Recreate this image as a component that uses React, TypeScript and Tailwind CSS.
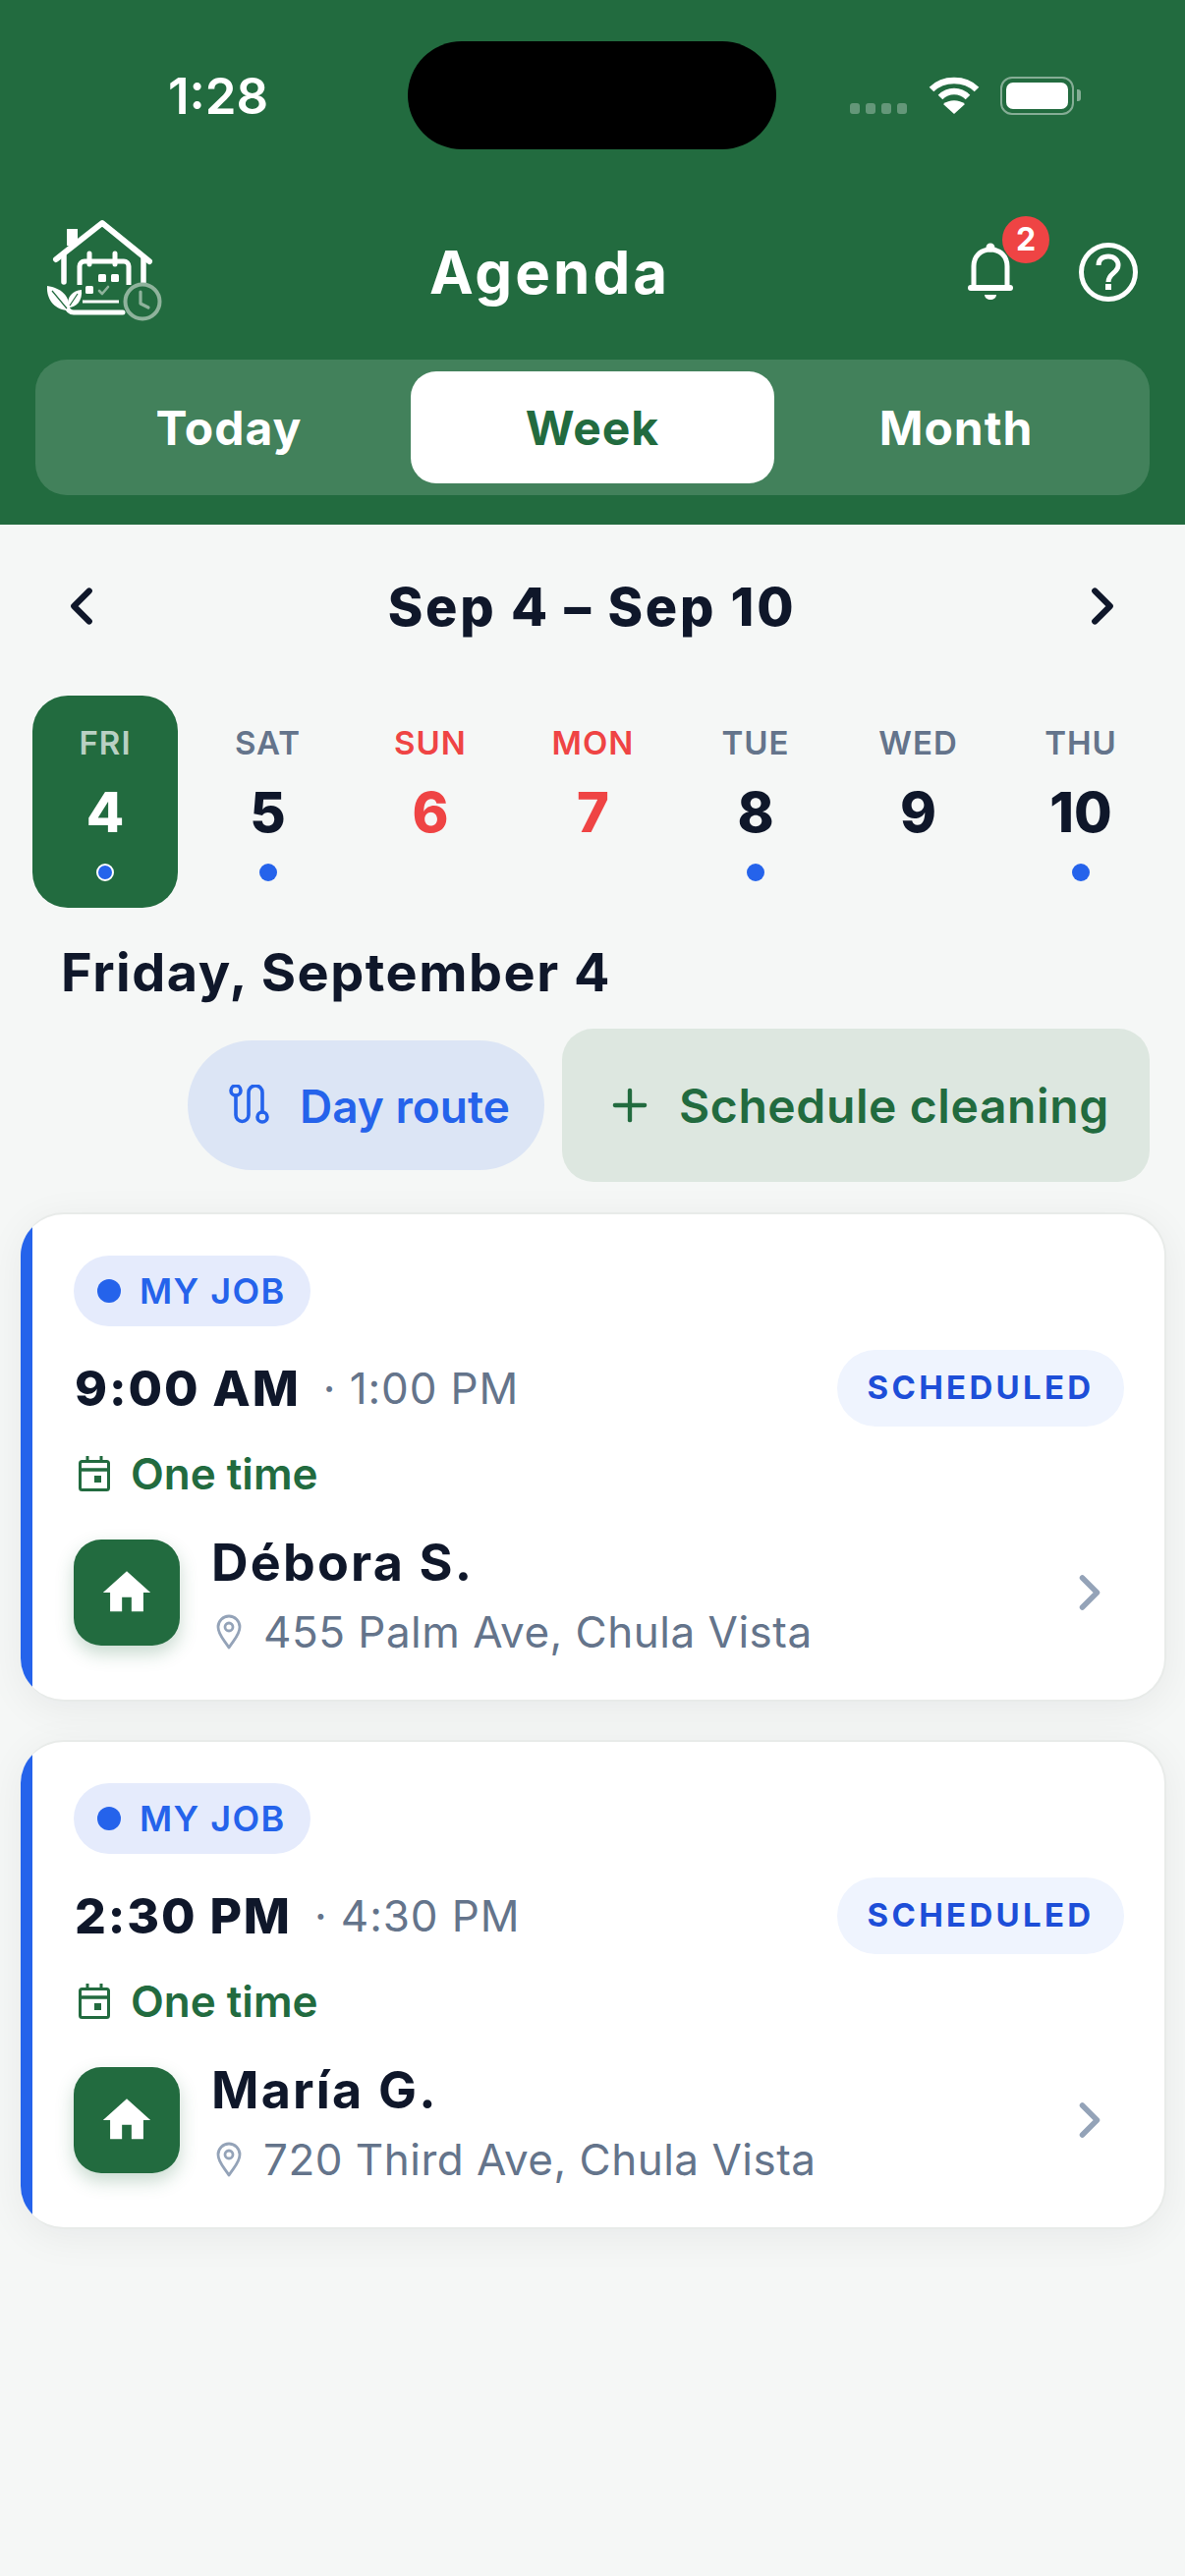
import React from 'react';
import { ChevronLeft, ChevronRight, Plus } from 'lucide-react';
import { MdHome } from 'react-icons/md';

const days = [
  { label: 'FRI', num: '4', dot: true, active: true },
  { label: 'SAT', num: '5', dot: true },
  { label: 'SUN', num: '6', red: true },
  { label: 'MON', num: '7', red: true },
  { label: 'TUE', num: '8', dot: true },
  { label: 'WED', num: '9' },
  { label: 'THU', num: '10', dot: true },
];

const jobs = [
  { start: '9:00 AM', end: '1:00 PM', name: 'Débora S.', address: '455 Palm Ave, Chula Vista' },
  { start: '2:30 PM', end: '4:30 PM', name: 'María G.', address: '720 Third Ave, Chula Vista' },
];

const Logo = () => (
  <svg width="160" height="140" viewBox="0 0 160 140" fill="none" className="mb-[14px] shrink-0">
    <path d="M27 64L74 27l48 39" stroke="#fff" strokeWidth="6" strokeLinecap="round" strokeLinejoin="round" />
    <rect x="38" y="33" width="11" height="17" fill="#fff" />
    <path d="M35 60v27M116 62v26" stroke="#fff" strokeWidth="5.5" strokeLinecap="round" />
    <path d="M51 90V71a5 5 0 0 1 5-5h40a5 5 0 0 1 5 5v19" stroke="#fff" strokeWidth="5" />
    <path d="M61 58v11M87 58v11" stroke="#fff" strokeWidth="5" strokeLinecap="round" />
    <rect x="70" y="79" width="8" height="8" rx="1.5" fill="#fff" />
    <rect x="83" y="79" width="8" height="8" rx="1.5" fill="#fff" />
    <rect x="57" y="91" width="8" height="8" rx="1.5" fill="#fff" />
    <path d="M71 96l3 3 6-7" stroke="#8fb39c" strokeWidth="2.6" strokeLinecap="round" strokeLinejoin="round" />
    <path d="M54 107h37" stroke="#fff" strokeWidth="3" />
    <path d="M38 112c1 4 3 6 7 6h50" stroke="#fff" strokeWidth="5" strokeLinecap="round" />
    <path d="M18 91c14 2 24 10 22 25C27 116 17 106 18 91z" fill="#fff" />
    <path d="M53 95c-9 1-15 6-14 18 9 0 15-7 14-18z" fill="#fff" />
    <path d="M23 96l15 18M49 99L41 111" stroke="#226b3f" strokeWidth="1.2" />
    <circle cx="115" cy="107" r="17.5" stroke="#8fb39c" strokeWidth="4" />
    <path d="M113 97v12l8 4" stroke="#8fb39c" strokeWidth="3.2" strokeLinecap="round" strokeLinejoin="round" />
  </svg>
);

const StatusIcons = () => (
  <div className="flex items-center">
    <div className="flex gap-[6px] mr-[22px] mt-[26px]">
      {[0, 1, 2, 3].map((i) => (
        <span key={i} className="w-[10px] h-[11px] rounded-[3px] bg-white/30" />
      ))}
    </div>
    <svg width="52" height="38" viewBox="0 0 52 38" fill="none" className="mr-[21px]">
      <path d="M3 13C15 1 37 1 49 13" stroke="#fff" strokeWidth="6.5" />
      <path d="M12 21c8-8 20-8 28 0" stroke="#fff" strokeWidth="6.5" />
      <path d="M26 38L15 28c6-5 16-5 22 0z" fill="#fff" />
    </svg>
    <div className="w-[75px] h-[39px] rounded-[12px] border-[2px] border-white/45 p-[4px]">
      <div className="w-full h-full rounded-[7px] bg-white" />
    </div>
    <div className="w-[4px] h-[12px] rounded-r-[3px] bg-white/45 ml-[3px]" />
  </div>
);

const Bell = () => (
  <svg width="46" height="60" viewBox="0 0 46 60" fill="none">
    <circle cx="23" cy="5" r="4.5" fill="#fff" />
    <path d="M6 43V24C6 14 13 7 23 7s17 7 17 17v19" stroke="#fff" strokeWidth="5" />
    <path d="M3 46h40" stroke="#fff" strokeWidth="6" strokeLinecap="round" />
    <path d="M17 53h12c0 3-3 5-6 5s-6-2-6-5z" fill="#fff" />
  </svg>
);

const Help = () => (
  <svg width="60" height="60" viewBox="0 0 60 60" fill="none">
    <circle cx="30" cy="30" r="27.5" stroke="#fff" strokeWidth="5" />
    <path d="M20 23c0-6 4-9 10-9s10 4 10 9c0 8-10 8-10 17" stroke="#fff" strokeWidth="5" />
    <rect x="27" y="42" width="6" height="6" fill="#fff" />
  </svg>
);

const RouteIcon = () => (
  <svg width="42" height="42" viewBox="0 0 42 42" fill="none" stroke="#2563eb" strokeWidth="3.6">
    <circle cx="7" cy="6" r="5" />
    <circle cx="34" cy="33" r="5" />
    <path d="M7 11V31a6.5 6.5 0 0 0 13 0V8a7 7 0 0 1 14 0V28" strokeLinecap="round" />
  </svg>
);

const CalendarIcon = () => (
  <svg width="32" height="36" viewBox="0 0 32 36" fill="none" stroke="#226b3f">
    <rect x="1.5" y="5.5" width="29" height="29" rx="2" strokeWidth="3" />
    <path d="M2 14h28" strokeWidth="3.5" />
    <path d="M9 0v7M23 0v7" strokeWidth="3" />
    <rect x="16" y="20" width="7" height="7" fill="#226b3f" strokeWidth="0" />
  </svg>
);

const PinIcon = () => (
  <svg width="26" height="36" viewBox="0 0 26 36" fill="none" stroke="#94a3b8" strokeWidth="2.8">
    <path d="M13 34C8 26 2 21 2 13a11 11 0 0 1 22 0c0 8-6 13-11 21z" strokeLinejoin="round" />
    <circle cx="13" cy="13" r="4" />
  </svg>
);

const JobCard = ({ job }: { job: (typeof jobs)[number] }) => (
  <div className="flex bg-white rounded-[44px] overflow-hidden border-2 border-l-0 border-[#e8ebe9] shadow-[0_8px_40px_rgba(15,23,42,0.06)]">
    <div className="w-[12px] bg-[#2563eb] shrink-0" />
    <div className="flex-1 pl-[42px] pr-[41px] pt-[42px] pb-[55px]">
      <div className="w-[241px] h-[72px] rounded-full bg-[#e5ebfc] flex items-center pl-[24px] gap-[19px]">
        <span className="w-[24px] h-[24px] rounded-full bg-[#2563eb]" />
        <span className="text-[36px] font-semibold tracking-[1.4px] text-[#2563eb]">MY JOB</span>
      </div>
      <div className="mt-[24px] h-[78px] flex items-center justify-between">
        <div className="flex items-center">
          <span className="text-[50px] font-extrabold tracking-[1.9px] text-[#0f172a] ml-[1px]">{job.start}</span>
          <span className="text-[44px] text-[#64748b] ml-[23px] tracking-[0.9px]">· {job.end}</span>
        </div>
        <span className="w-[292px] h-[78px] rounded-full bg-[#eff4fe] flex items-center justify-center text-[33px] font-bold tracking-[3.3px] text-[#1d4ed8]">
          SCHEDULED
        </span>
      </div>
      <div className="mt-[28px] h-[40px] flex items-center pl-[5px] gap-[21px]">
        <CalendarIcon />
        <span className="text-[44px] font-semibold text-[#226b3f]">One time</span>
      </div>
      <div className="mt-[47px] h-[108px] flex items-center">
        <div className="w-[108px] h-[108px] rounded-[28px] bg-[#226b3f] flex items-center justify-center shadow-[0_8px_18px_rgba(34,107,63,0.25)]">
          <MdHome className="text-white" size={58} />
        </div>
        <div className="ml-[32px] flex-1 pt-[4px]">
          <div className="text-[52px] font-bold tracking-[2.2px] leading-[64px] text-[#0f172a]">{job.name}</div>
          <div className="flex items-center mt-[11px] pl-[5px] gap-[22px]">
            <PinIcon />
            <span className="text-[44px] leading-[54px] text-[#64748b] tracking-[0.5px]">{job.address}</span>
          </div>
        </div>
        <ChevronRight className="text-[#94a3b8] shrink-0 mr-[5px]" size={60} strokeWidth={2.2} />
      </div>
    </div>
  </div>
);

export default function App() {
  return (
    <div className="w-[1206px] h-[2622px] bg-[#f5f7f6] overflow-hidden font-['Inter',sans-serif]">
      <header className="h-[534px] bg-[#226b3f] pt-[42px]">
        <div className="flex items-center h-[110px]">
          <div className="w-[415px] text-center text-[51px] font-semibold text-white pl-[29px] leading-none">1:28</div>
          <div className="w-[375px] h-[110px] rounded-[55px] bg-black" />
          <div className="pl-[75px]">
            <StatusIcons />
          </div>
        </div>
        <div className="mt-[70px] h-[110px] flex items-center pl-[30px] pr-[48px]">
          <Logo />
          <h1 className="flex-1 text-center text-[60px] font-bold text-white tracking-[3px] mr-[56px]">Agenda</h1>
          <div className="flex items-center gap-[67px]">
            <div className="relative">
              <Bell />
              <span className="absolute left-[35px] top-[-27px] w-[48px] h-[48px] rounded-full bg-[#ef4444] flex items-center justify-center text-[32px] font-bold text-white">
                2
              </span>
            </div>
            <Help />
          </div>
        </div>
        <div className="mt-[34px] mx-[36px] h-[138px] rounded-[32px] bg-white/15 p-[12px] grid grid-cols-[370px_370px_370px] text-[48px] font-bold tracking-[1px]">
          <div className="flex items-center justify-center pt-[2px] text-white">Today</div>
          <div className="flex items-center justify-center pt-[2px] bg-white rounded-[26px] text-[#226b3f]">Week</div>
          <div className="flex items-center justify-center pt-[2px] text-white">Month</div>
        </div>
      </header>

      <div className="mt-[50px] h-[66px] flex items-center justify-between pl-[52px] pr-[53px]">
        <ChevronLeft className="text-[#0f172a]" size={62} strokeWidth={2.4} />
        <div className="text-[54px] font-extrabold tracking-[2.7px] text-[#0f172a]">Sep 4 – Sep 10</div>
        <ChevronRight className="text-[#0f172a]" size={62} strokeWidth={2.4} />
      </div>

      <div className="mt-[58px] pl-[33px] flex gap-[17.5px]">
        {days.map((d) => (
          <div
            key={d.label}
            className={`w-[148px] h-[216px] rounded-[36px] flex flex-col items-center ${d.active ? 'bg-[#226b3f]' : ''}`}
          >
            <div
              className={`mt-[28px] h-[40px] leading-[40px] text-[33px] font-semibold tracking-[1px] ${
                d.active ? 'text-white/70' : d.red ? 'text-[#ef4444]' : 'text-[#64748b]'
              }`}
            >
              {d.label}
            </div>
            <div
              className={`mt-[21px] h-[60px] leading-[60px] text-[56px] font-extrabold ${
                d.active ? 'text-white' : d.red ? 'text-[#ef4444]' : 'text-[#0f172a]'
              }`}
            >
              {d.num}
            </div>
            {d.dot && (
              <span
                className={`mt-[22px] w-[18px] h-[18px] rounded-full bg-[#2563eb] ${d.active ? 'border-2 border-white' : ''}`}
              />
            )}
          </div>
        ))}
      </div>

      <h2 className="mt-[33px] ml-[62px] h-[66px] leading-[66px] text-[54px] font-bold tracking-[1.5px] text-[#0f172a]">
        Friday, September 4
      </h2>

      <div className="mt-[24px] pr-[36px] flex items-center justify-end gap-[18px]">
        <div className="w-[363px] h-[132px] rounded-full bg-[#dce5f5] flex items-center pl-[42px] gap-[30px]">
          <RouteIcon />
          <span className="text-[46px] font-semibold text-[#2563eb] pt-[2px]">Day route</span>
        </div>
        <div className="w-[598px] h-[156px] rounded-[32px] bg-[#dde7e0] flex items-center pl-[43px] gap-[24px]">
          <Plus className="text-[#226b3f]" size={52} strokeWidth={2} />
          <span className="text-[48px] font-semibold tracking-[0.6px] text-[#226b3f] pt-[2px]">Schedule cleaning</span>
        </div>
      </div>

      <div className="mt-[31px] ml-[21px] mr-[19px] flex flex-col gap-[39px]">
        {jobs.map((job) => (
          <JobCard key={job.name} job={job} />
        ))}
      </div>
    </div>
  );
}
